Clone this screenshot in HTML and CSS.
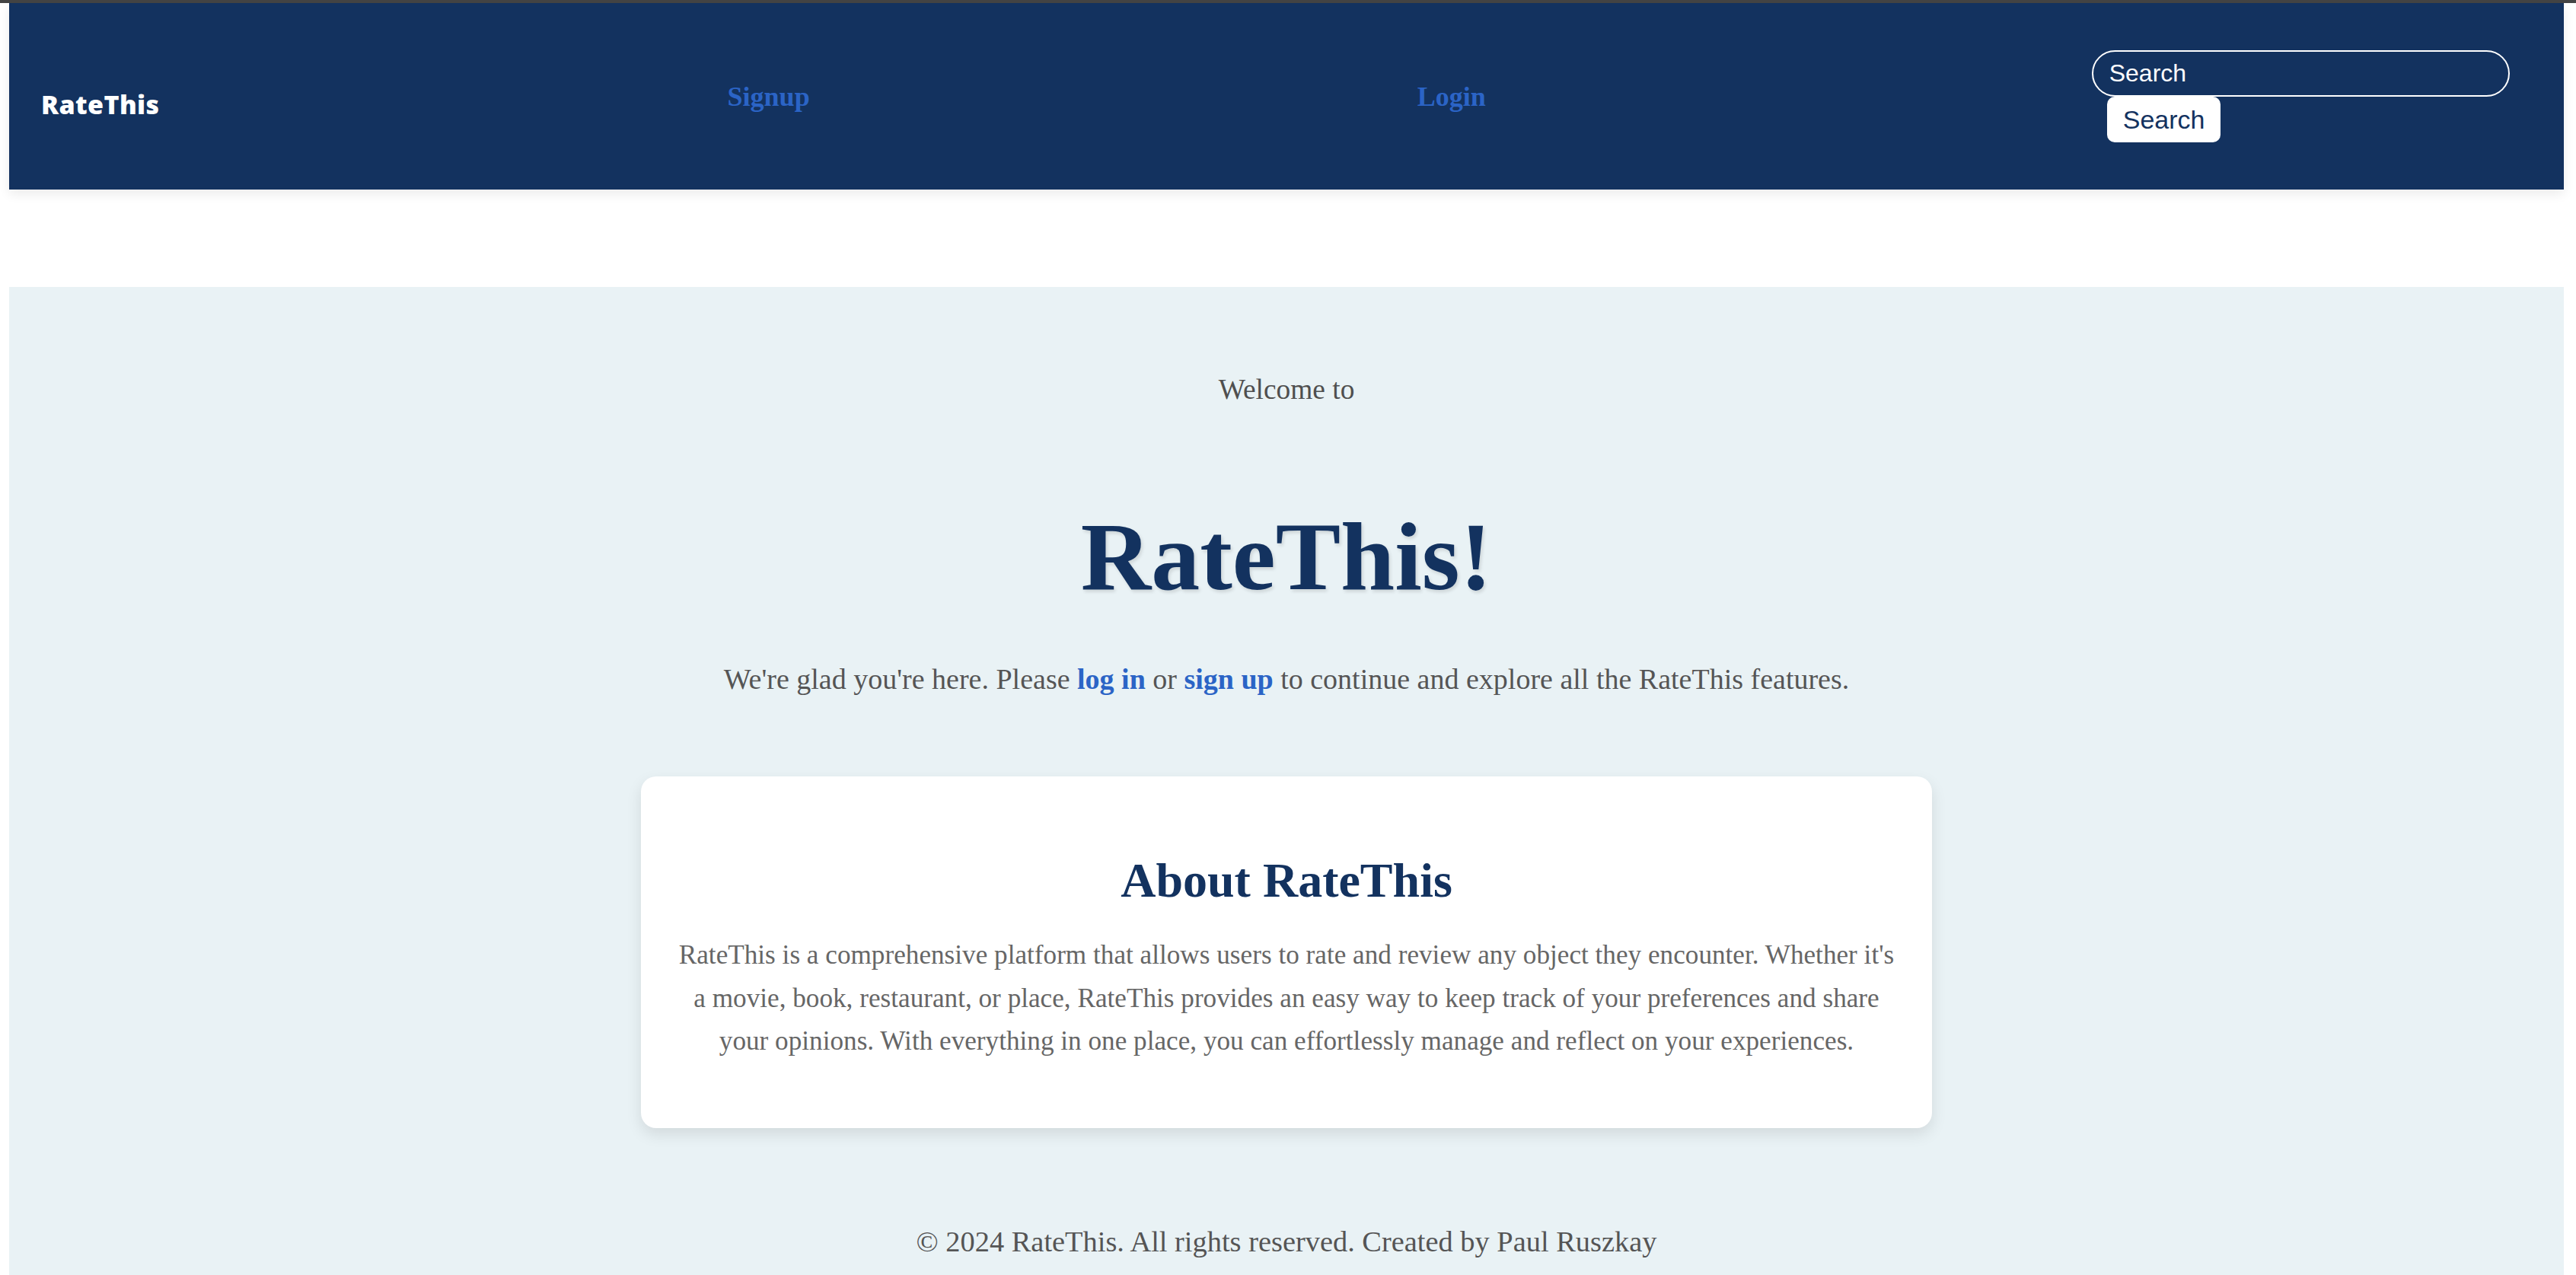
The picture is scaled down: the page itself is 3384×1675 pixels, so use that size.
FILE: index.html
```html
<!DOCTYPE html>
<html lang="en">
<head>
<meta charset="utf-8">
<title>RateThis</title>
<link rel="stylesheet" href="styles.css">
</head>
<body>
<div class="topbar"></div>
<div class="page">
  <header class="site-header">
    <a class="logo" href="#">RateThis</a>
    <a class="nav-link nav-signup" href="#">Signup</a>
    <a class="nav-link nav-login" href="#">Login</a>
    <form class="search-form">
      <input class="search-input" type="text" placeholder="Search">
      <button class="search-btn" type="button">Search</button>
    </form>
  </header>

  <main class="hero">
    <p class="welcome">Welcome to</p>
    <h1 class="brand">RateThis!</h1>
    <p class="intro">We're glad you're here. Please <a class="inline-link" href="#">log in</a> or <a class="inline-link" href="#">sign up</a> to continue and explore all the RateThis features.</p>

    <section class="about-card">
      <h2 class="about-title">About RateThis</h2>
      <p class="about-text">RateThis is a comprehensive platform that allows users to rate and review any object they encounter. Whether it's a movie, book, restaurant, or place, RateThis provides an easy way to keep track of your preferences and share your opinions. With everything in one place, you can effortlessly manage and reflect on your experiences.</p>
    </section>

    <footer class="site-footer">
      <p class="footer-text">&copy; 2024 RateThis. All rights reserved. Created by Paul Ruszkay</p>
    </footer>
  </main>
</div>
</body>
</html>
```
FILE: styles.css
```css
html, body {
  margin: 0;
  padding: 0;
  background: #ffffff;
}

body {
  font-family: "Liberation Serif", "Times New Roman", serif;
  overflow: hidden;
}

.topbar {
  height: 4px;
  background: #444444;
}

.page {
  margin: 0 16px 0 12px;
}

.site-header {
  height: 245px;
  background: #13325f;
  display: flex;
  align-items: center;
  padding-left: 42px;
  box-shadow: 0 6px 14px rgba(0, 0, 0, 0.08);
  position: relative;
  z-index: 1;
}

.logo {
  font-family: "Open Sans", "Liberation Sans", sans-serif;
  font-weight: 800;
  font-size: 34px;
  letter-spacing: 0.4px;
  color: #ffffff;
  text-decoration: none;
  margin-top: 20px;
  line-height: 1;
}

.nav-link {
  font-family: "Liberation Serif", "Times New Roman", serif;
  font-weight: 700;
  font-size: 36px;
  color: #2b64c6;
  text-decoration: none;
  line-height: 1;
}

.nav-signup {
  margin-left: 746px;
}

.nav-login {
  margin-left: 798px;
}

.search-form {
  margin-left: 796px;
  display: flex;
  flex-direction: column;
  align-items: flex-start;
}

.search-input {
  box-sizing: border-box;
  width: 549px;
  height: 61px;
  border: 2px solid #ffffff;
  border-radius: 31px;
  background: transparent;
  color: #ffffff;
  font-family: "Liberation Sans", Arial, sans-serif;
  font-size: 32px;
  padding: 0 21px;
  margin: 0;
  outline: none;
}

.search-input::placeholder {
  color: #ffffff;
  opacity: 1;
}

.search-btn {
  margin: 0 0 0 20px;
  height: 60px;
  padding: 0 21px;
  border: none;
  border-radius: 10px;
  background: #ffffff;
  color: #13325f;
  font-family: "Liberation Sans", Arial, sans-serif;
  font-size: 34px;
  line-height: 1;
}

.hero {
  margin-top: 128px;
  background: #e9f2f5;
  padding-top: 113px;
  padding-bottom: 60px;
  text-align: center;
}

.welcome {
  margin: 0;
  font-size: 37.4px;
  line-height: 1.15;
  color: #4f4f4f;
}

.brand {
  margin: 125px 0 0;
  font-size: 128px;
  line-height: 1.15;
  font-weight: 700;
  color: #13325f;
  text-shadow: 2px 3px 4px rgba(0, 0, 0, 0.12);
}

.intro {
  margin: 66px 0 0;
  font-size: 38px;
  line-height: 1.15;
  color: #555555;
}

.inline-link {
  color: #2b64c6;
  font-weight: 700;
  text-decoration: none;
}

.about-card {
  box-sizing: border-box;
  width: 1696px;
  margin: 105px auto 0;
  padding: 100px 48px 86px;
  background: #ffffff;
  border-radius: 20px;
  box-shadow: 0 8px 20px rgba(0, 0, 0, 0.1);
}

.about-title {
  margin: 0 0 34px;
  font-size: 64px;
  line-height: 1.15;
  font-weight: 700;
  color: #13325f;
}

.about-text {
  margin: 0;
  font-size: 35.2px;
  line-height: 1.6;
  color: #666666;
}

.site-footer {
  margin-top: 127px;
}

.footer-text {
  margin: 0;
  font-size: 38.4px;
  line-height: 1.15;
  color: #555555;
}
```
